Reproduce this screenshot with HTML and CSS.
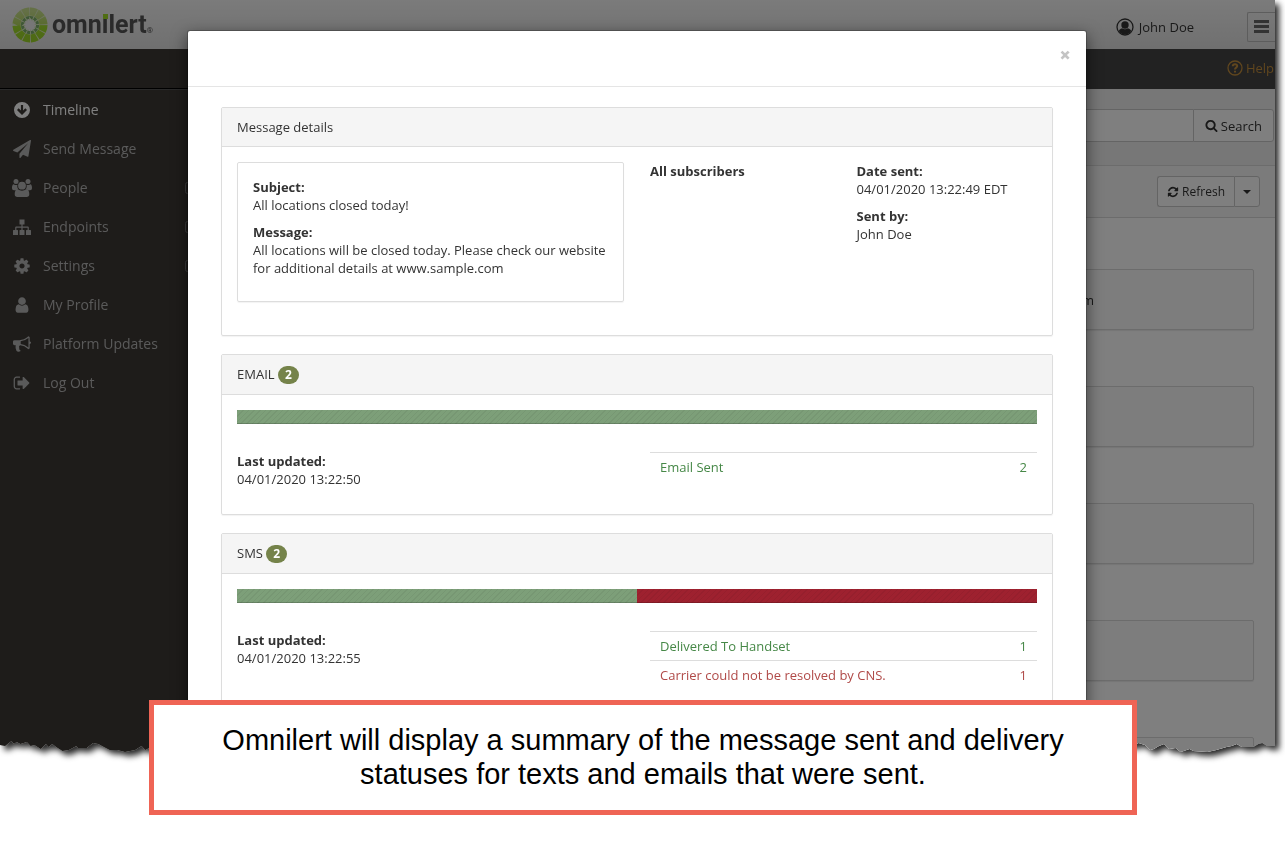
FILE: index.html
```html
<!DOCTYPE html>
<html lang="en">
<head>
	<meta charset="utf-8">
	<meta name="viewport" content="width=device-width, initial-scale=1">
	<title>Omnilert - Timeline</title>
	<link rel="stylesheet" href="styles.css">
</head>
<body>
	<div class="snapshot">
		<div class="app">
			<header class="topbar">
				<a class="brand" href="#">
					<svg class="brand-mark" viewBox="0 0 36 36" aria-hidden="true">
						<defs>
							<linearGradient id="ring" x1="0" y1="0" x2="0" y2="1">
								<stop offset="0" stop-color="#c8e08c"/>
								<stop offset=".48" stop-color="#b4d860"/>
								<stop offset=".56" stop-color="#a0dc2c"/>
								<stop offset="1" stop-color="#9cd42a"/>
							</linearGradient>
						</defs>
						<circle cx="18" cy="18" r="17.5" fill="#dcebc0"/>
						<circle cx="18" cy="18" r="13.5" fill="none" stroke="url(#ring)" stroke-width="8" pathLength="120" stroke-dasharray="8.8 1.2"/>
						<circle cx="18" cy="18" r="7.4" fill="none" stroke="#7fb06a" stroke-width="3.4" pathLength="120" stroke-dasharray="7.4 2.6"/>
						<circle cx="18" cy="18" r="4.6" fill="#eeeeee"/>
						<circle cx="18" cy="18" r="5" fill="none" stroke="#eeeeee" stroke-width="2" pathLength="120" stroke-dasharray="6 4"/>
					</svg>
					<span class="brand-name">omn<span class="brand-i">i</span>lert<sup>®</sup></span>
				</a>
				<a class="user" href="#">
					<svg class="icon-user" viewBox="0 0 18 18" aria-hidden="true">
						<defs><clipPath id="face"><circle cx="9" cy="9" r="7.4"/></clipPath></defs>
						<circle cx="9" cy="9" r="8" fill="none" stroke="currentColor" stroke-width="1.3"/>
						<g clip-path="url(#face)"><circle cx="9" cy="7" r="3.7"/><path d="M2.2 17v-2.800c.6-2.400 2.200-3.600 3.900-4 1.600 1.300 4.200 1.300 5.800 0 1.700.4 3.300 1.600 3.900 4V17z"/></g>
					</svg>
					John Doe
				</a>
				<button type="button" class="toggle" aria-label="Toggle menu">
					<svg viewBox="0 0 15 13" aria-hidden="true"><path d="M0 0h15v3H0zM0 5h15v3H0zM0 10h15v3H0z"/></svg>
				</button>
			</header>

			<div class="columns">
				<nav class="sidebar">
					<ul>
						<li class="active"><a href="#">
							<svg class="icon" viewBox="0 0 18 18" aria-hidden="true"><path fill-rule="evenodd" d="M9 1a8 8 0 1 1 0 16A8 8 0 0 1 9 1zM7.9 4v5.400L5.700 7.200 4 8.900l5 5 5-5-1.700-1.700-2.200 2.200V4z"/></svg>
							Timeline</a></li>
						<li><a href="#">
							<svg class="icon" viewBox="0 0 1792 1792" aria-hidden="true"><path d="M1764 11q33 24 27 64l-256 1536q-5 29-32 45-14 8-31 8-11 0-24-5l-453-185-242 295q-18 23-49 23-13 0-22-4-19-7-30.5-23.5t-11.5-36.5v-349l864-1059-1069 925-395-162q-37-14-40-55-2-40 32-59l1664-960q15-9 32-9 20 0 36 11z"/></svg>
							Send Message</a></li>
						<li><a href="#">
							<svg class="icon icon-wide" viewBox="0 0 20 18" aria-hidden="true"><circle cx="4" cy="2.5" r="2.5"/><circle cx="16" cy="2.5" r="2.5"/><circle cx="10" cy="6.7" r="3.9"/><path d="M0 9c0-2 .5-3.800 1.700-3.800 1.200 1 2.900 1 3.800.6-.5 1.500-.2 3.100.8 4.400-1 0-1.900.4-2.500 1H2C.8 11.200 0 10.500 0 9zM20 9c0-2-.5-3.800-1.700-3.800-1.200 1-2.900 1-3.800.6.5 1.500.2 3.100-.8 4.400 1 0 1.900.4 2.500 1H18c1.200 0 2-.7 2-2.200zM2.700 15.300c0-2.800.8-5 3.200-5 2.300 1.900 5.900 1.900 8.200 0 2.400 0 3.200 2.200 3.200 5 0 1.700-1.100 2.700-2.600 2.700H5.300c-1.500 0-2.600-1-2.600-2.700z"/></svg>
							People
							<svg class="expand" viewBox="0 0 12 12" aria-hidden="true"><path d="M2.500.5h7a2 2 0 0 1 2 2v7a2 2 0 0 1-2 2h-7a2 2 0 0 1-2-2v-7a2 2 0 0 1 2-2zM3 6h6M6 3v6"/></svg></a></li>
						<li><a href="#">
							<svg class="icon" viewBox="0 0 18 18" aria-hidden="true"><path d="M6.500 1.500h5v5H9.600V8.500H14.800q1 0 1 1V12H17.500q.5 0 .5.5v4q0 .5-.5.5h-4q-.5 0-.5-.5v-4q0-.5.5-.5h1.100V9.700H9.600V12h1.400q.5 0 .5.5v4q0 .5-.5.5H7q-.5 0-.5-.5v-4q0-.5.5-.5h1.400V9.700h-5V12h1.100q.5 0 .5.5v4q0 .5-.5.5h-4q-.5 0-.5-.5v-4q0-.5.5-.5h1.700V9.500q0-1 1-1h5.200V6.500H6.500z"/></svg>
							Endpoints
							<svg class="expand" viewBox="0 0 12 12" aria-hidden="true"><path d="M2.500.5h7a2 2 0 0 1 2 2v7a2 2 0 0 1-2 2h-7a2 2 0 0 1-2-2v-7a2 2 0 0 1 2-2zM3 6h6M6 3v6"/></svg></a></li>
						<li><a href="#">
							<svg class="icon" viewBox="0 0 1792 1792" aria-hidden="true"><path d="M1152 896q0-106-75-181t-181-75-181 75-75 181 75 181 181 75 181-75 75-181zm512-109v222q0 12-8 23t-20 13l-185 28q-19 54-39 91 35 50 107 138 10 12 10 25t-9 23q-27 37-99 108t-94 71q-12 0-26-9l-138-108q-44 23-91 38-16 136-29 186-7 28-36 28h-222q-14 0-24.5-8.5t-11.5-21.5l-28-184q-49-16-90-37l-141 107q-10 9-25 9-14 0-25-11-126-114-165-168-7-10-7-23 0-12 8-23 15-21 51-66.5t54-70.5q-27-50-41-99l-183-27q-13-2-21-12.5t-8-23.5v-222q0-12 8-23t19-13l186-28q14-46 39-92-40-57-107-138-10-12-10-24 0-10 9-23 26-36 98.5-107.5t94.5-71.5q13 0 26 10l138 107q44-23 91-38 16-136 29-186 7-28 36-28h222q14 0 24.5 8.5t11.5 21.5l28 184q49 16 90 37l142-107q9-9 24-9 13 0 25 10 129 119 165 170 7 8 7 22 0 12-8 23-15 21-51 66.5t-54 70.5q26 50 41 98l183 28q13 2 21 12.5t8 23.5z"/></svg>
							Settings
							<svg class="expand" viewBox="0 0 12 12" aria-hidden="true"><path d="M2.500.5h7a2 2 0 0 1 2 2v7a2 2 0 0 1-2 2h-7a2 2 0 0 1-2-2v-7a2 2 0 0 1 2-2zM3 6h6M6 3v6"/></svg></a></li>
						<li><a href="#">
							<svg class="icon" viewBox="0 0 1792 1792" aria-hidden="true"><path d="M1536 1399q0 109-62.5 187t-150.5 78h-854q-88 0-150.5-78t-62.5-187q0-85 8.5-160.5t31.5-152 58.5-131 94-89 134.5-34.5q131 128 313 128t313-128q76 0 134.5 34.5t94 89 58.5 131 31.5 152 8.5 160.5zm-256-887q0 159-112.5 271.5t-271.5 112.5-271.5-112.5-112.5-271.5 112.5-271.5 271.5-112.5 271.5 112.5 112.5 271.5z"/></svg>
							My Profile</a></li>
						<li><a href="#">
							<svg class="icon" viewBox="0 0 1792 1792" aria-hidden="true"><path d="M1664 640q53 0 90.5 37.5t37.5 90.5-37.5 90.5-90.5 37.5v384q0 52-38 90t-90 38q-417-347-812-380-58 19-91 66t-31 100.5 40 92.5q-20 33-23 65.5t6 58 33.5 55 48 50 61.5 50.5q-29 58-111.5 83t-168.5 11.5-132-55.5q-7-23-29.5-87.5t-32-94.5-23-89-15-101 3.5-98.5 22-110.5h-122q-66 0-113-47t-47-113v-192q0-66 47-113t113-47h480q435 0 896-384 52 0 90 38t38 90v384zm-128 604v-954q-394 302-768 343v270q377 42 768 341z"/></svg>
							Platform Updates</a></li>
						<li><a href="#">
							<svg class="icon" viewBox="0 0 1792 1792" aria-hidden="true"><path d="M704 1440q0 4 1 20t.5 26.5-3 23.5-10 19.5-20.5 6.5h-320q-119 0-203.5-84.5t-84.5-203.5v-704q0-119 84.5-203.5t203.5-84.5h320q13 0 22.5 9.500t9.500 22.500q0 4 1 20t.5 26.500-3 23.500-10 19.500-20.500 6.500h-320q-66 0-113 47t-47 113v704q0 66 47 113t113 47h312l11.500 1 11.500 3 8 5.500 7 9 2 13.500zm928-544q0 26-19 45l-544 544q-19 19-45 19t-45-19-19-45v-288h-448q-26 0-45-19t-19-45v-384q0-26 19-45t45-19h448v-288q0-26 19-45t45-19 45 19l544 544q19 19 19 45z"/></svg>
							Log Out</a></li>
					</ul>
				</nav>

				<main class="main">
					<div class="helpbar">
						<a href="#">
							<svg viewBox="0 0 16 16" aria-hidden="true"><circle cx="8" cy="8" r="7"/><path class="mark" d="M5.700 6.300c.2-3 4.700-2.700 4.500-.1C10.100 7.700 8 7.700 8 9.500M8 10.700v1.800"/></svg>
							Help</a>
					</div>
					<form class="searchbar">
						<input type="text" name="q" aria-label="Search timeline">
						<button type="button" class="btn">
							<svg viewBox="0 0 1792 1792" aria-hidden="true"><path d="M1216 832q0-185-131.5-316.5t-316.5-131.5-316.5 131.5-131.5 316.5 131.5 316.5 316.5 131.5 316.5-131.5 131.5-316.5zm512 832q0 52-38 90t-90 38q-54 0-90-38l-343-342q-179 124-399 124-143 0-273.5-55.5t-225-150-150-225-55.5-273.5 55.5-273.5 150-225 225-150 273.5-55.5 273.5 55.5 225 150 150 225 55.5 273.5q0 220-124 399l343 343q37 37 37 90z"/></svg>
							Search</button>
					</form>
					<div class="actions">
						<button type="button" class="btn btn-refresh">
							<svg viewBox="0 0 1792 1792" aria-hidden="true"><path d="M1639 1056q0 5-1 7-64 268-268 434.5t-478 166.5q-146 0-282.5-55t-243.5-157l-129 129q-19 19-45 19t-45-19-19-45v-448q0-26 19-45t45-19h448q26 0 45 19t19 45-19 45l-137 137q71 66 161 102t187 36q134 0 250-65t186-179q11-17 53-117 8-23 30-23h192q13 0 22.5 9.5t9.5 22.5zm25-800v448q0 26-19 45t-45 19h-448q-26 0-45-19t-19-45 19-45l138-138q-148-137-349-137-134 0-250 65t-186 179q-11 17-53 117-8 23-30 23h-199q-13 0-22.5-9.5t-9.5-22.5v-7q65-268 270-434.5t480-166.5q146 0 284 55.5t245 156.5l130-129q19-19 45-19t45 19 19 45z"/></svg>
							Refresh</button>
						<button type="button" class="btn btn-caret" aria-label="More refresh options"><span class="caret"></span></button>
					</div>
					<div class="entries">
						<div class="entry">m</div>
						<div class="entry"></div>
						<div class="entry"></div>
						<div class="entry"></div>
						<div class="entry"></div>
					</div>
				</main>
			</div>

			<div class="backdrop">
				<section class="modal" role="dialog" aria-label="Message details">
					<div class="modal-header">
						<button type="button" class="close" aria-label="Close">×</button>
					</div>
					<div class="modal-body">
						<div class="panel">
							<div class="panel-heading">Message details</div>
							<div class="panel-body grid">
								<div class="well half">
									<p><strong>Subject:</strong><br>All locations closed today!</p>
									<p><strong>Message:</strong><br>All locations will be closed today. Please check our website for additional details at www.sample.com</p>
								</div>
								<div><strong>All subscribers</strong></div>
								<div>
									<p><strong>Date sent:</strong><br>04/01/2020 13:22:49 EDT</p>
									<p><strong>Sent by:</strong><br>John Doe</p>
								</div>
							</div>
						</div>

						<div class="panel">
							<div class="panel-heading">EMAIL <span class="badge">2</span></div>
							<div class="panel-body">
								<div class="progress"><div class="bar bar-success" style="width: 100%"></div></div>
								<div class="grid">
									<div class="half"><strong>Last updated:</strong><br>04/01/2020 13:22:50</div>
									<table class="half statuses">
										<tbody>
											<tr class="text-success"><td>Email Sent</td><td class="count">2</td></tr>
										</tbody>
									</table>
								</div>
							</div>
						</div>

						<div class="panel">
							<div class="panel-heading">SMS <span class="badge">2</span></div>
							<div class="panel-body">
								<div class="progress"><div class="bar bar-success" style="width: 50%"></div><div class="bar bar-danger" style="width: 50%"></div></div>
								<div class="grid">
									<div class="half"><strong>Last updated:</strong><br>04/01/2020 13:22:55</div>
									<table class="half statuses">
										<tbody>
											<tr class="text-success"><td>Delivered To Handset</td><td class="count">1</td></tr>
											<tr class="text-danger"><td>Carrier could not be resolved by CNS.</td><td class="count">1</td></tr>
										</tbody>
									</table>
								</div>
							</div>
						</div>
					</div>
				</section>
			</div>
		</div>
	</div>

	<aside class="callout">
		<p>Omnilert will display a summary of the message sent and delivery statuses for texts and emails that were sent.</p>
	</aside>
</body>
</html>
```
FILE: styles.css
```css
*{box-sizing:border-box;}
body,ul,li,p,input,button{margin:0;padding:0;}
body{
	position: relative;
	min-height: 100vh;
	background: #fff;
	color: #333;
	font: 13px/18px "Open Sans","Noto Sans",sans-serif;
}
ul{list-style:none;}
a{color:inherit;text-decoration:none;}
button{font:inherit;color:inherit;background:none;border:none;cursor:pointer;}
svg{fill:currentColor;}

/* torn-off page with its shadow */
.snapshot{
	padding-right: 10px;
	filter: drop-shadow(4px 4px 3px rgba(0,0,0,.85));
}
.app{
	position: relative;
	display: flex;
	flex-direction: column;
	height: calc(100vh - 88px);
	overflow: hidden;
	background: #fff;
	clip-path: polygon(0 0,100% 0,
		100% calc(100% - 7px),99.4% calc(100% - 7px),99% calc(100% - 10px),98.7% calc(100% - 9px),98.3% calc(100% - 6px),97.4% calc(100% - 6px),
		97% calc(100% - 9px),96.6% calc(100% - 7px),96.2% calc(100% - 6px),95.4% calc(100% - 3px),94.7% calc(100% - 1px),93.6% calc(100% - 2px),
		93.3% calc(100% - 4px),92.6% calc(100% - 1px),92.2% calc(100% - 5px),91.7% calc(100% - 4px),91.3% calc(100% - 9px),90.9% calc(100% - 7px),
		90.5% calc(100% - 4px),90.2% calc(100% - 3px),89.8% calc(100% - 8px),89.3% calc(100% - 10px),89% calc(100% - 8px),
		12% calc(100% - 7px),11.4% calc(100% - 3px),11.1% calc(100% - 7px),10.6% calc(100% - 3px),9.8% calc(100% - 1px),9.2% calc(100% - 3px),
		8.6% calc(100% - 3px),8.3% calc(100% - 5px),7.7% calc(100% - 9px),7.3% calc(100% - 10px),6.8% calc(100% - 5px),6.1% calc(100% - 5px),
		6% calc(100% - 7px),5.4% calc(100% - 3px),4.9% calc(100% - 2px),4.4% calc(100% - 6px),4.1% calc(100% - 9px),3.8% calc(100% - 6px),
		3.6% calc(100% - 9px),3.2% calc(100% - 4px),2.7% calc(100% - 8px),2.4% calc(100% - 7px),2.1% calc(100% - 11px),1.6% calc(100% - 9px),
		1.3% calc(100% - 11px),1.1% calc(100% - 9px),.9% calc(100% - 12px),.4% calc(100% - 7px),0 calc(100% - 8px));
}

.topbar{
	display: flex;
	flex: none;
	align-items: center;
	height: 49px;
	padding-left: 12px;
	background: linear-gradient(#f6f6f6,#e0e0e0);
}
.brand{display:flex;align-items:center;gap:4px;margin-right:auto;}
.brand-mark{width:36px;height:36px;}
.brand-name{color:#555;font:bold 25px/36px Roboto,sans-serif;}
.brand-name sup{font-size:8px;font-weight:normal;line-height:1;vertical-align:baseline;}
.brand-i{position:relative;}
.brand-i::after{
	content: "";
	position: absolute;
	left: 1px;
	top: 4px;
	width: 5px;
	height: 5px;
	background: #a0dc28;
}
.user{display:flex;align-items:center;gap:5px;margin-right:53px;padding-top:5px;}
.icon-user{width:18px;height:18px;}
.toggle{
	width: 28px;
	height: 30px;
	margin-top: 4px;
	border: 1px solid #bbb;
	border-right: none;
	border-radius: 2px 0 0 2px;
	color: #666;
}
.toggle svg{display:block;width:15px;height:13px;margin:auto;}

.columns{display:flex;flex:1;min-height:0;}
.sidebar{
	width: 206px;
	background: #3c3834;
	color: #b4b4b4;
	font-size: 14px;
}
.sidebar ul{
	margin-top: 39px;
	border-top: 1px solid #000;
	box-shadow: inset 0 1px #555;
	padding-top: 1px;
}
.sidebar a{display:flex;align-items:center;height:39px;padding:0 9px 0 13px;}
.sidebar .active{color:#fff;}
.icon{width:18px;height:18px;margin-right:12px;}
.icon-wide{width:20px;margin:0 11px 0 -1px;}
.expand{width:12px;height:12px;margin-left:auto;fill:none;stroke:#777;}

.main{display:flex;flex:1;flex-direction:column;min-width:0;}
.helpbar{
	display: flex;
	flex: none;
	align-items: center;
	justify-content: flex-end;
	height: 40px;
	padding: 0 1px 2px 0;
	background: #444;
	color: #c08c3c;
}
.helpbar a{display:flex;align-items:center;gap:3px;}
.helpbar svg{width:16px;height:16px;fill:none;stroke:currentColor;stroke-width:1.3;}
.helpbar .mark{stroke-width:2;}
.searchbar{
	display: flex;
	flex: none;
	padding: 20px 1px 23px 20px;
	background: #eee;
	border-bottom: 1px solid #d8d8d8;
}
.searchbar input{
	flex: 1;
	min-width: 0;
	height: 33px;
	padding: 0 10px;
	border: 1px solid #c8c8c8;
	border-right: none;
	border-radius: 3px 0 0 3px;
	background: #fff;
	font: inherit;
}
.btn{
	display: flex;
	align-items: center;
	justify-content: center;
	gap: 3px;
	padding: 0 11px;
	border: 1px solid #c8c8c8;
	border-radius: 0 3px 3px 0;
	background: #fff;
}
.btn svg{width:13px;height:13px;}
.actions{
	display: flex;
	flex: none;
	justify-content: flex-end;
	padding: 10px 15px;
	background: #f6f6f6;
	border-bottom: 1px solid #d8d8d8;
}
.actions .btn{height:31px;font-size:12px;}
.actions .btn svg{width:12px;height:12px;}
.actions .btn-refresh{border-right:none;border-radius:3px 0 0 3px;padding:0 9px;}
.actions .btn-caret{width:26px;padding:0;}
.caret{border:4px solid transparent;border-top-color:currentColor;border-bottom:none;}
.entries{
	display: flex;
	flex-direction: column;
	gap: 56px;
	padding: 51px 21px 0 20px;
}
.entry{
	flex: none;
	height: 61px;
	padding: 21px 159px 0 20px;
	border: 1px solid #d8d8d8;
	border-radius: 2px;
	box-shadow: 0 1px 1px rgba(0,0,0,.08);
	background: #fafafa;
	text-align: right;
}

.backdrop{
	position: absolute;
	inset: 0;
	padding: 30px 11px 0 10px;
	overflow: hidden;
	background: rgba(0,0,0,.5);
}
.modal{
	max-width: 900px;
	margin: 0 auto;
	border: 1px solid rgba(0,0,0,.2);
	border-radius: 3px;
	background: #fff;
	background-clip: padding-box;
	box-shadow: 0 5px 15px rgba(0,0,0,.5);
}
.modal-header{
	display: flex;
	justify-content: flex-end;
	align-items: flex-start;
	height: 56px;
	padding: 14px 15px;
	border-bottom: 1px solid #e5e5e5;
}
.close{color:#c4c4c4;font-size:20px;font-weight:800;line-height:20px;}
.modal-body{padding:20px 33px;}

.panel{
	margin-bottom: 18px;
	border: 1px solid #ddd;
	border-radius: 2px;
	box-shadow: 0 1px 1px rgba(0,0,0,.05);
}
.panel-heading{
	padding: 10px 15px;
	border-bottom: 1px solid #ddd;
	background: #f5f5f5;
}
.panel-body{padding:15px;}
.grid{
	display: grid;
	grid-template-columns: repeat(4,1fr);
	gap: 0 26px;
	align-items: start;
}
.half{grid-column:span 2;}
.well{
	margin-bottom: 18px;
	padding: 15px;
	border: 1px solid #ddd;
	border-radius: 2px;
	box-shadow: 0 1px 1px rgba(0,0,0,.05);
}
.panel p{margin-bottom:9px;}
.badge{
	display: inline-block;
	padding: 0 7px;
	border-radius: 9px;
	background: #75834a;
	color: #fff;
	font-size: 12px;
	font-weight: bold;
}
.progress{display:flex;height:14px;margin-bottom:28px;}
.bar{
	background-image: repeating-linear-gradient(135deg,rgba(0,0,0,.05) 0 1px,transparent 1px 4px);
	box-shadow: inset 0 -1px rgba(0,0,0,.18);
}
.bar-success{background-color:#7d9f79;}
.bar-danger{background-color:#9e212f;}
.statuses{width:100%;margin-bottom:18px;border-collapse:collapse;}
.statuses td{padding:5px 10px;border-top:1px solid #ddd;}
.statuses .count{text-align:right;}
.text-success{color:#468847;}
.text-danger{color:#b04a48;}

/* caption laid over the bottom of the page */
.callout{
	position: absolute;
	left: 149px;
	right: 148px;
	bottom: 26px;
	padding: 18px 60px 19px;
	border: 5px solid #ef6455;
	background: #fff;
	color: #000;
	font: 29px/34px "Liberation Sans",Arial,sans-serif;
	text-align: center;
}
```
